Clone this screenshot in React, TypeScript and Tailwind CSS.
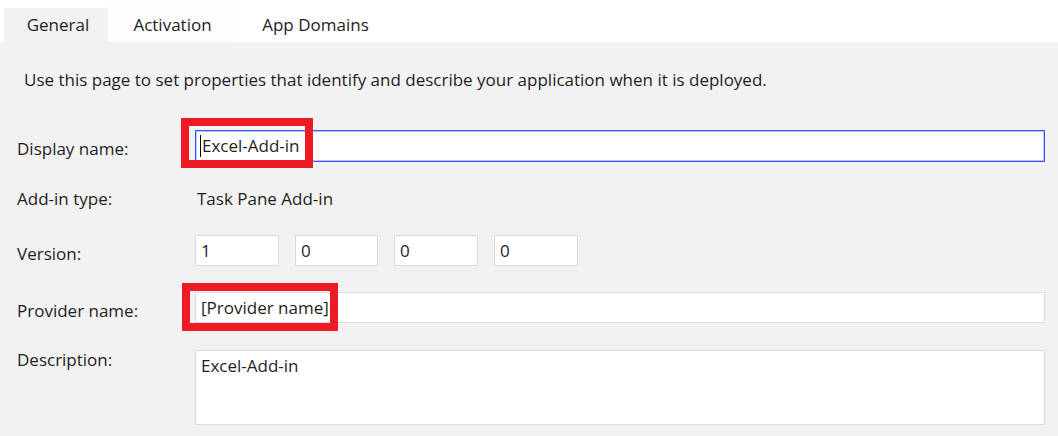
import React from "react";

const font = { fontFamily: '"Open Sans", "Noto Sans", sans-serif' };

const Label = ({ children, className = "" }: { children: React.ReactNode; className?: string }) => (
  <div className={`w-[195px] shrink-0 pl-[17px] leading-[24px] ${className}`}>{children}</div>
);

const Box = ({ value, className = "" }: { value: string; className?: string }) => (
  <div className={`flex items-center border border-[#dadbe6] bg-white pl-[5px] ${className}`}>
    <span className="leading-[24px]">{value}</span>
  </div>
);

export default function App() {
  return (
    <div
      className="relative h-[436px] w-[1058px] overflow-hidden bg-[#f2f2f2] text-[17px] text-[#1e1e1e]"
      style={font}
    >
      {/* tabs */}
      <div className="flex h-[42px] items-end bg-white pl-[4px]">
        <div className="flex h-[34px] w-[104px] items-center justify-center bg-[#f2f2f2] pl-[4px]">General</div>
        <div className="flex h-[42px] w-[125px] items-center justify-center bg-[#fdfdfd] pl-[4px] pt-[8px]">Activation</div>
        <div className="flex h-[42px] w-[165px] items-center justify-center pt-[8px]">App Domains</div>
      </div>

      <p className="mt-[26px] pl-[24px] leading-[24px]">
        Use this page to set properties that identify and describe your application when it is deployed.
      </p>

      <div className="mt-[38px] flex flex-col">
        {/* display name */}
        <div className="flex h-[32px] items-start">
          <Label className="pt-[7px]">Display name:</Label>
          <div className="flex h-[32px] w-[850px] items-center border border-[#3656ff] bg-white pl-[4px] shadow-[inset_0_0_0_1px_#b4c1ff]">
            <span className="mr-[1px] h-[22px] w-px bg-black" />
            <span className="leading-[24px]">Excel-Add-in</span>
          </div>
        </div>

        {/* add-in type */}
        <div className="mt-[25px] flex h-[24px] items-start">
          <Label>Add-in type:</Label>
          <span className="pl-[2px] leading-[24px]">Task Pane Add-in</span>
        </div>

        {/* version */}
        <div className="mt-[24px] flex h-[31px] items-start">
          <Label className="pt-[7px]">Version:</Label>
          <div className="flex gap-[16px]">
            <Box value="1" className="h-[31px] w-[84px]" />
            <Box value="0" className="h-[31px] w-[83px]" />
            <Box value="0" className="h-[31px] w-[84px]" />
            <Box value="0" className="h-[31px] w-[84px]" />
          </div>
        </div>

        {/* provider name */}
        <div className="mt-[26px] flex h-[31px] items-start">
          <Label className="pt-[7px]">Provider name:</Label>
          <Box value="[Provider name]" className="h-[31px] w-[850px]" />
        </div>

        {/* description */}
        <div className="mt-[27px] flex items-start">
          <Label className="-mt-[2px]">Description:</Label>
          <div className="h-[75px] w-[850px] border border-[#dadbe6] bg-white pl-[5px] pt-[3px] leading-[24px]">
            Excel-Add-in
          </div>
        </div>
      </div>

      {/* red highlight annotations */}
      <div className="pointer-events-none absolute left-[181px] top-[118px] h-[50px] w-[132px] border-[8px] border-[#ed1c24]" />
      <div className="pointer-events-none absolute left-[182px] top-[283px] h-[48px] w-[156px] border-[8px] border-[#ed1c24]" />
    </div>
  );
}
